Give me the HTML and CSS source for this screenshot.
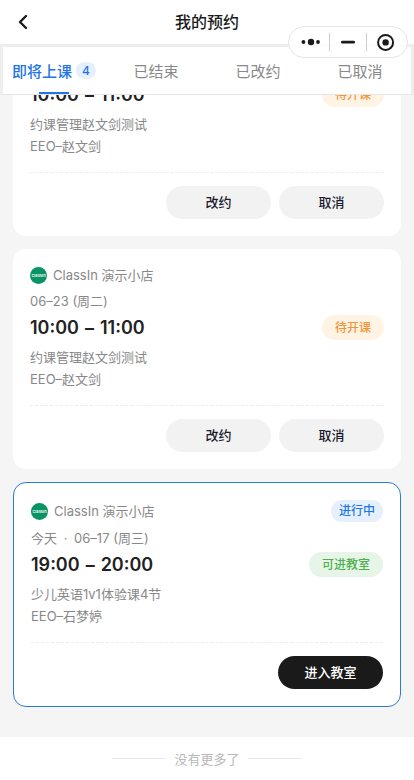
FILE: index.html
```html
<!DOCTYPE html>
<html lang="zh-CN">
<head>
<meta charset="utf-8">
<meta name="viewport" content="width=device-width, initial-scale=1">
<title>我的预约</title>
<link rel="stylesheet" href="styles.css">
</head>
<body>
<header class="header">
  <button class="back" type="button" aria-label="返回">
    <svg width="12" height="16" viewBox="0 0 12 16"><path d="M9 2 3 8l6 6" fill="none" stroke="#1a1a1a" stroke-width="2.4" stroke-linecap="round" stroke-linejoin="round"/></svg>
  </button>
  <h1 class="title">我的预约</h1>
  <div class="capsule">
    <button type="button" aria-label="更多">
      <svg width="20" height="18" viewBox="0 0 20 18"><circle cx="3.4" cy="9" r="1.9"/><circle cx="11" cy="9" r="3.2"/><circle cx="18" cy="9" r="1.9"/></svg>
    </button>
    <button type="button" aria-label="最小化">
      <svg width="18" height="18" viewBox="0 0 18 18"><rect x="2" y="7.8" width="14" height="2.8" rx="1.4"/></svg>
    </button>
    <button type="button" aria-label="关闭">
      <svg width="18" height="18" viewBox="0 0 18 18"><circle cx="8.6" cy="9.4" r="7.5" fill="none" stroke="#1a1a1a" stroke-width="2"/><circle cx="8.6" cy="9.4" r="3.2"/></svg>
    </button>
  </div>
</header>
<nav class="tabs">
  <a class="tab active" href="#upcoming"><span>即将上课</span><span class="count">4</span></a>
  <a class="tab" href="#finished">已结束</a>
  <a class="tab" href="#changed">已改约</a>
  <a class="tab" href="#cancelled">已取消</a>
</nav>
<main class="list">
  <article class="card">
    <div class="shop"><span class="avatar">ClassIn</span><span class="name">ClassIn 演示小店</span></div>
    <p class="line date">06–23 (周二)</p>
    <div class="time"><h2><time>10:00</time><span>–</span><time>11:00</time></h2><span class="status waiting">待开课</span></div>
    <p class="line">约课管理赵文剑测试</p>
    <p class="line">EEO–赵文剑</p>
    <div class="actions"><button class="btn" type="button">改约</button><button class="btn" type="button">取消</button></div>
  </article>
  <article class="card">
    <div class="shop"><span class="avatar">ClassIn</span><span class="name">ClassIn 演示小店</span></div>
    <p class="line date">06–23 (周二)</p>
    <div class="time"><h2><time>10:00</time><span>–</span><time>11:00</time></h2><span class="status waiting">待开课</span></div>
    <p class="line">约课管理赵文剑测试</p>
    <p class="line">EEO–赵文剑</p>
    <div class="actions"><button class="btn" type="button">改约</button><button class="btn" type="button">取消</button></div>
  </article>
  <article class="card current">
    <div class="shop"><span class="avatar">ClassIn</span><span class="name">ClassIn 演示小店</span><span class="tag">进行中</span></div>
    <p class="line date">今天 <span class="dot">·</span> 06–17 (周三)</p>
    <div class="time"><h2><time>19:00</time><span>–</span><time>20:00</time></h2><span class="status ready">可进教室</span></div>
    <p class="line">少儿英语1v1体验课4节</p>
    <p class="line">EEO–石梦婷</p>
    <div class="actions"><button class="btn primary" type="button">进入教室</button></div>
  </article>
</main>
<footer class="end">没有更多了</footer>
</body>
</html>
```
FILE: styles.css
```css
* {
  box-sizing: border-box;
}

body {
  margin: 0;
  height: 100vh;
  display: flex;
  flex-direction: column;
  background: #f5f5f5;
  color: #888;
  font-family: Inter, "Noto Sans CJK SC", sans-serif;
  font-size: 13px;
}

h1,
h2,
p {
  margin: 0;
}

button {
  border: 0;
  padding: 0;
  background: none;
  font: inherit;
}

svg {
  display: block;
  fill: #1a1a1a;
}

.header {
  position: relative;
  flex: none;
  display: flex;
  align-items: center;
  justify-content: center;
  height: 44px;
  background: #fff;
}

.back {
  position: absolute;
  left: 17px;
  top: 14px;
}

.title {
  font-size: 16px;
  font-weight: 500;
  line-height: 24px;
  color: #1a1a1a;
}

.capsule {
  position: absolute;
  z-index: 2;
  top: 26px;
  right: 6px;
  display: flex;
  align-items: center;
  width: 120px;
  height: 32px;
  padding: 0 3px;
  border: 1px solid #e6e6e6;
  border-radius: 16px;
  background: rgba(255, 255, 255, 0.85);
}

.capsule button {
  flex: 1;
  display: flex;
  justify-content: center;
}

.capsule button + button {
  border-left: 1px solid #ccc;
}

.tabs {
  flex: none;
  display: grid;
  grid-template-columns: repeat(4, 1fr);
  height: 51px;
  border: 3px solid #eee;
  border-bottom: 1px solid #e6e6e6;
  background: #fff;
}

.tab {
  position: relative;
  display: flex;
  align-items: center;
  justify-content: center;
  gap: 4px;
  font-size: 15px;
  color: #888;
  text-decoration: none;
}

.active {
  font-weight: 500;
  color: #1f75e8;
}

.active::after {
  content: "";
  position: absolute;
  bottom: 0;
  left: 50%;
  width: 30px;
  height: 2px;
  margin-left: -15px;
  background: #1f75e8;
}

.count {
  width: 20px;
  border-radius: 9px;
  background: #e6f0fd;
  font-size: 12px;
  line-height: 17px;
  text-align: center;
}

.list {
  flex: 1;
  min-height: 0;
  overflow: hidden;
  display: flex;
  flex-direction: column;
  justify-content: flex-end;
  gap: 13px;
  padding: 0 13px 30px;
}

.card {
  flex: none;
  padding: 17px;
  border-radius: 13px;
  background: #fff;
}

.current {
  border: 1px solid #2b7bd6;
}

.shop {
  display: flex;
  align-items: center;
  gap: 6px;
  line-height: 19px;
}

.avatar {
  width: 17px;
  border-radius: 50%;
  background: #0a9465;
  color: #fff;
  font-size: 4px;
  font-weight: 600;
  line-height: 17px;
  text-align: center;
}

.tag {
  margin-left: auto;
  padding: 0 8px;
  border-radius: 11px;
  background: #e6f0fd;
  color: #1f75e8;
  font-size: 12px;
  font-weight: 500;
  line-height: 22px;
}

.line {
  line-height: 22px;
}

.date {
  margin: 5px 0 3px;
}

.dot {
  margin: 0 3px;
}

.time {
  display: flex;
  align-items: flex-start;
  justify-content: space-between;
  height: 26px;
  margin-bottom: 5px;
}

.time h2 {
  display: flex;
  gap: 6px;
  font-size: 18px;
  font-weight: 600;
  line-height: 26px;
  color: #222;
}

.status {
  padding: 0 13px;
  border-radius: 13px;
  font-size: 12px;
  font-weight: 500;
  line-height: 25px;
}

.waiting {
  background: #fff3e3;
  color: #f2953a;
}

.ready {
  background: #e6f5e7;
  color: #4caf50;
}

.actions {
  display: flex;
  justify-content: flex-end;
  gap: 8px;
  margin-top: 15px;
  padding-top: 13px;
  border-top: 1px dashed #ececec;
}

.btn {
  width: 105px;
  border-radius: 17px;
  background: #f2f2f2;
  color: #1a1a2e;
  font-weight: 500;
  line-height: 33px;
}

.primary {
  background: #1a1a1a;
  color: #fff;
}

.end {
  flex: none;
  display: flex;
  align-items: center;
  justify-content: center;
  gap: 8px;
  height: 43px;
  background: #fff;
  color: #b8b8b8;
}

.end::before,
.end::after {
  content: "";
  width: 54px;
  border-top: 1px solid #e8e8e8;
}
```
